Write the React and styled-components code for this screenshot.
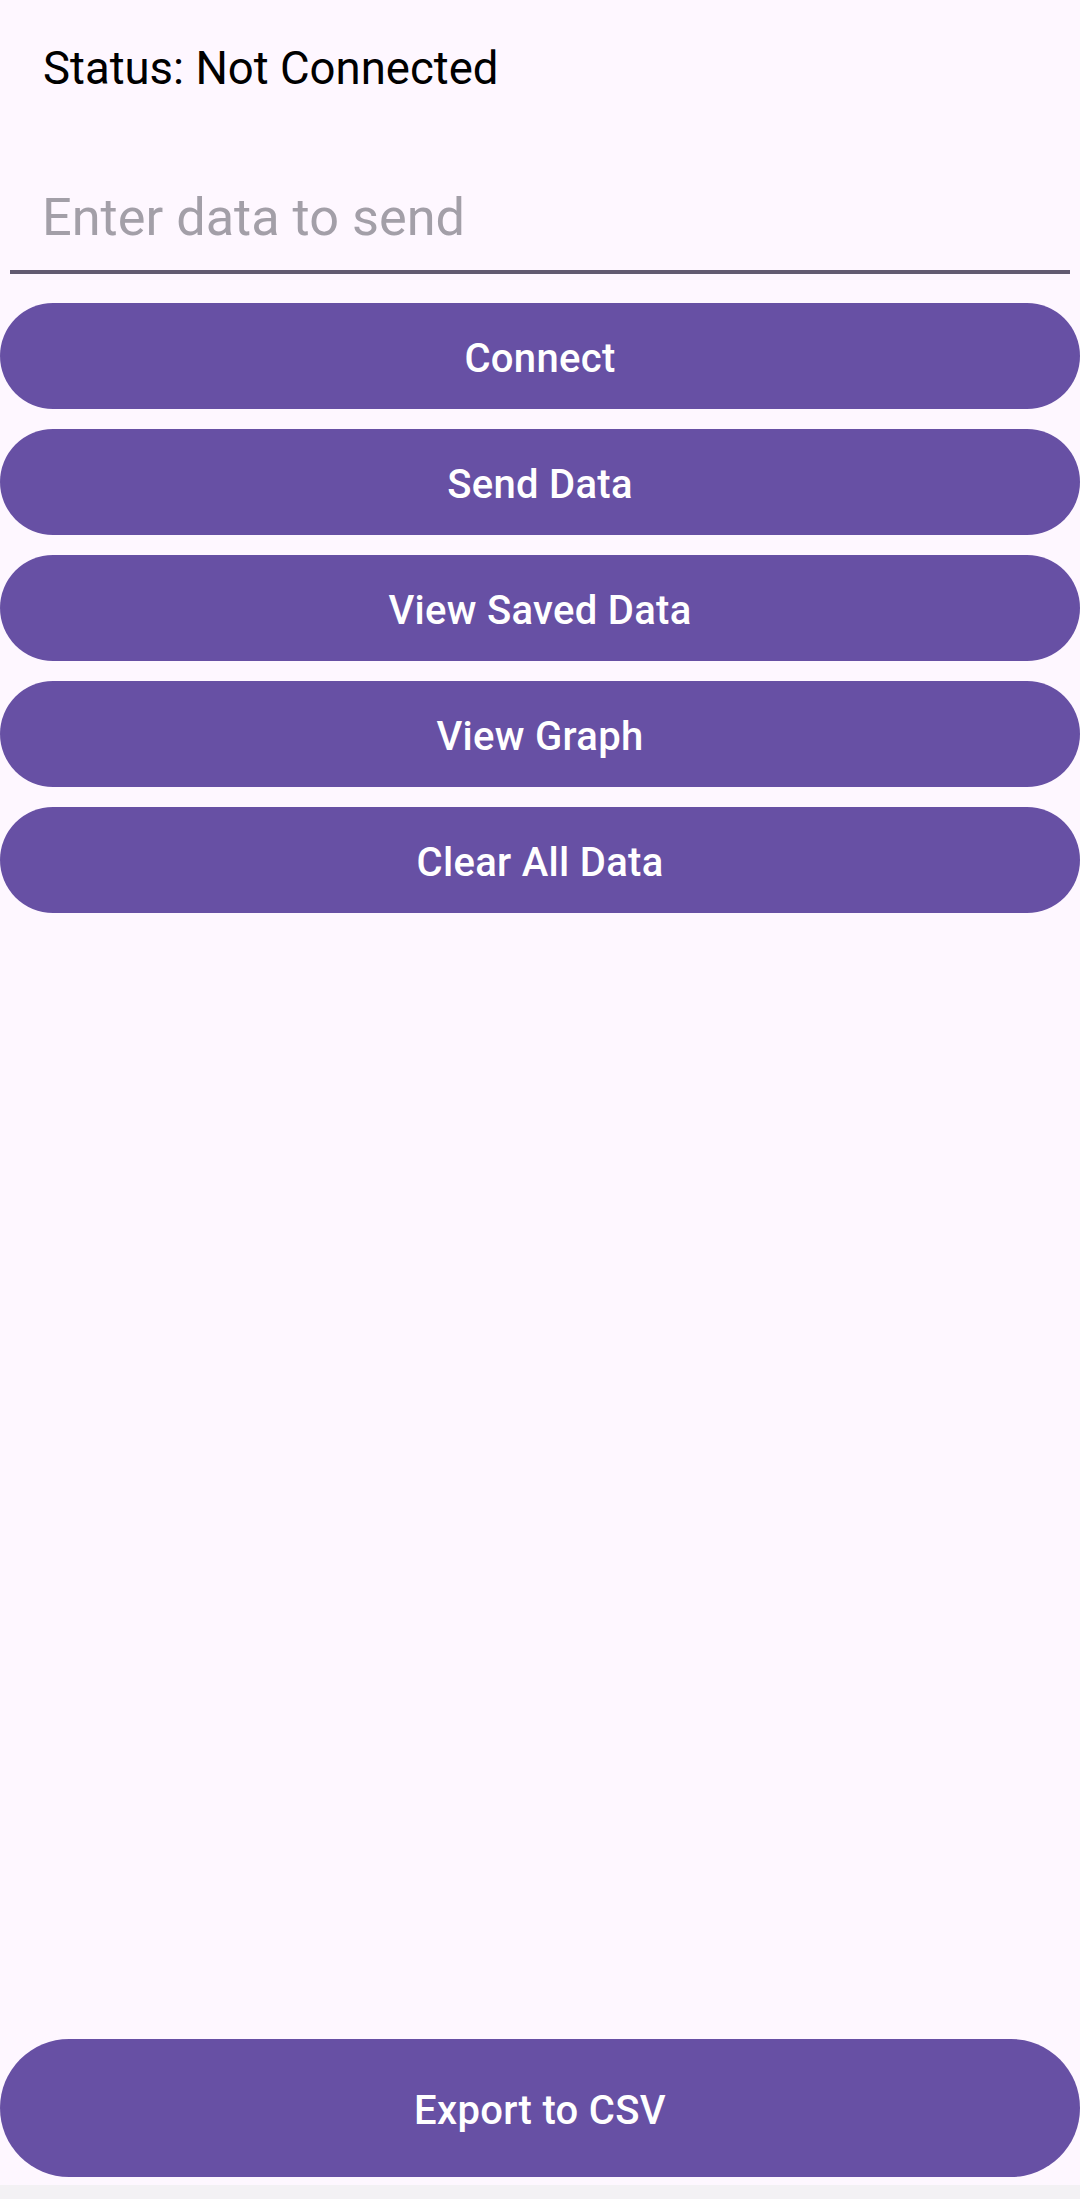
import React from "react";
import styled, { createGlobalStyle } from "styled-components";

const Global = createGlobalStyle`
  html, body { margin: 0; padding: 0; background: #FEF7FF; }
  body { font-family: Roboto, "Noto Sans", sans-serif; }
  * { box-sizing: border-box; }
`;

const Screen = styled.div`
  display: flex;
  flex-direction: column;
  min-height: 2199px;
  background: #FEF7FF;
`;

const Content = styled.div`
  display: flex;
  flex-direction: column;
  flex: 1;
`;

const Status = styled.div`
  margin: 42px 0 0 43px;
  font-size: 45.5px;
  line-height: normal;
  color: #000;
`;

const InputWrap = styled.div`
  margin: 91px 10px 0 10px;
  border-bottom: 4px solid #625B71;
  padding: 0 0 4px 32px;
  height: 88px;
  display: flex;
  align-items: flex-start;
`;

const Input = styled.input`
  border: none;
  outline: none;
  background: transparent;
  width: 100%;
  font-family: Roboto, sans-serif;
  font-size: 52.3px;
  line-height: normal;
  padding: 0;
  color: #1D1B20;
  &::placeholder { color: #A39FA8; }
`;

const Buttons = styled.div`
  display: flex;
  flex-direction: column;
  gap: 20px;
  margin-top: 29px;
`;

const PillButton = styled.button`
  width: 100%;
  height: ${p => p.$tall ? 138 : 106}px;
  border: none;
  border-radius: 999px;
  background: #6750A4;
  color: #fff;
  font-family: Roboto, sans-serif;
  font-weight: 500;
  font-size: 40px;
  letter-spacing: 0.3px;
  display: flex;
  align-items: center;
  justify-content: center;
  padding: 4px 0 0 0;
`;

const Bottom = styled.div`
  padding-bottom: 8px;
`;

const NavStrip = styled.div`
  height: 14px;
  background: #F3F1F4;
`;

export default function App() {
  const actions = ["Connect", "Send Data", "View Saved Data", "View Graph", "Clear All Data"];
  return (
    <>
      <Global />
      <Screen>
        <Content>
          <Status>Status: Not Connected</Status>
          <InputWrap>
            <Input placeholder="Enter data to send" />
          </InputWrap>
          <Buttons>
            {actions.map(a => <PillButton key={a}>{a}</PillButton>)}
          </Buttons>
        </Content>
        <Bottom>
          <PillButton $tall>Export to CSV</PillButton>
        </Bottom>
        <NavStrip />
      </Screen>
    </>
  );
}
